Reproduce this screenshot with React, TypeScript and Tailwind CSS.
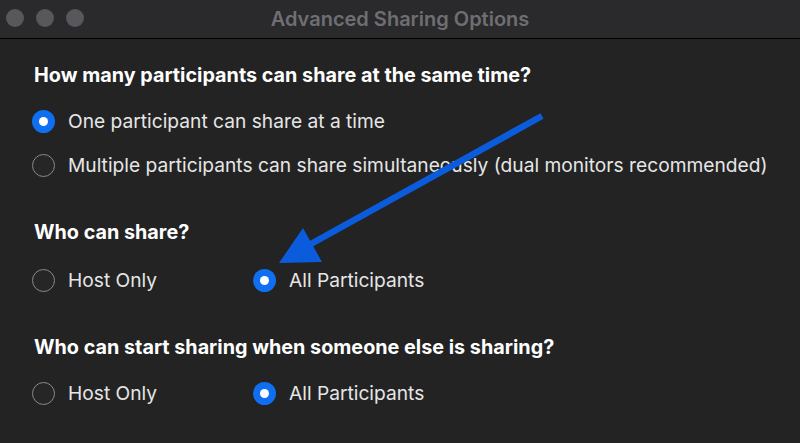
import React from "react";

function Radio({ checked }: { checked: boolean }) {
  return checked ? (
    <span className="flex h-[23px] w-[23px] shrink-0 items-center justify-center rounded-full bg-[#0f6ff0]">
      <span className="h-[9px] w-[9px] rounded-full bg-white" />
    </span>
  ) : (
    <span className="h-[23px] w-[23px] shrink-0 rounded-full border border-[#8a8a8a] bg-[#262626]" />
  );
}

function Option({ checked, label, w }: { checked: boolean; label: string; w?: string }) {
  return (
    <div className={`flex h-[24px] items-center gap-[13px] ${w ?? ""}`}>
      <Radio checked={checked} />
      <span className="text-[19.2px] leading-[24px] text-[#e6e6e6]">{label}</span>
    </div>
  );
}

function Heading({ children, mt }: { children: React.ReactNode; mt: string }) {
  return <div className={`ml-[2px] h-[24px] text-[19.8px] font-bold leading-[24px] text-white ${mt}`}>{children}</div>;
}

export default function App() {
  return (
    <div
      className="relative h-[443px] w-[800px] overflow-hidden bg-[#232323]"
      style={{ fontFamily: "Inter, 'Noto Sans', sans-serif" }}
    >
      <div className="relative flex h-[39px] items-center justify-center border-b border-black bg-[#2a2a2d]">
        <div className="absolute left-[6px] top-[9px] flex gap-[12px]">
          <span className="h-[18px] w-[18px] rounded-full bg-[#58585c]" />
          <span className="h-[18px] w-[18px] rounded-full bg-[#58585c]" />
          <span className="h-[18px] w-[18px] rounded-full bg-[#58585c]" />
        </div>
        <span className="text-[20px] font-semibold text-[#6f6f72]">Advanced Sharing Options</span>
      </div>
      <div className="flex flex-col pl-[32px]">
        <Heading mt="mt-[24px]">How many participants can share at the same time?</Heading>
        <div className="mt-[22px] flex flex-col gap-[20px]">
          <Option checked label="One participant can share at a time" />
          <Option checked={false} label="Multiple participants can share simultaneously (dual monitors recommended)" />
        </div>
        <Heading mt="mt-[43px]">Who can share?</Heading>
        <div className="mt-[24px] flex">
          <Option checked={false} label="Host Only" w="w-[221px]" />
          <Option checked label="All Participants" />
        </div>
        <Heading mt="mt-[43px]">Who can start sharing when someone else is sharing?</Heading>
        <div className="mt-[22px] flex">
          <Option checked={false} label="Host Only" w="w-[221px]" />
          <Option checked label="All Participants" />
        </div>
      </div>
      <svg className="pointer-events-none absolute left-0 top-0" width="800" height="443">
        <line x1="542" y1="116" x2="300" y2="250" stroke="#0b5cdc" strokeWidth="6.5" />
        <polygon points="279,263 303,228 322,262" fill="#0b5cdc" />
      </svg>
    </div>
  );
}
